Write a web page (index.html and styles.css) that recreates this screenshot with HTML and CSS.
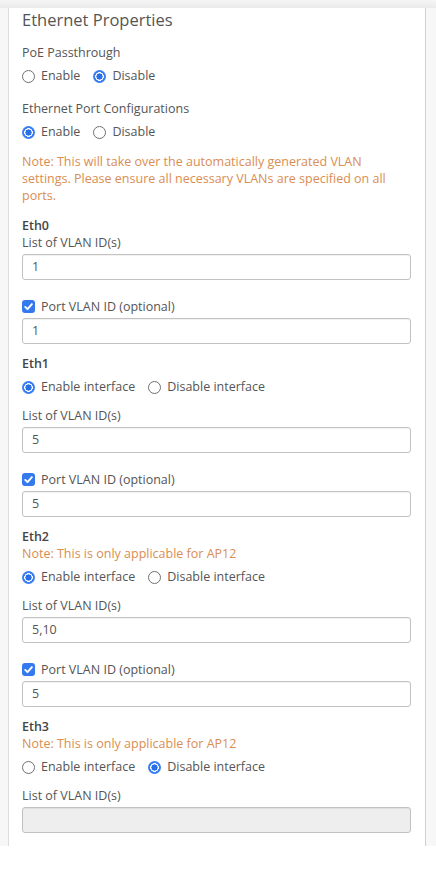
FILE: index.html
```html
<!DOCTYPE html>
<html lang="en">
<head>
<meta charset="utf-8">
<title>Ethernet Properties</title>
<link rel="stylesheet" href="styles.css">
</head>
<body>
<div class="topbar"></div>
<div class="page">
  <section class="panel">
    <h2 class="title">Ethernet Properties</h2>

    <div class="sec-label">PoE Passthrough</div>
    <div class="radios">
      <label class="opt"><span class="radio"></span>Enable</label>
      <label class="opt"><span class="radio on"></span>Disable</label>
    </div>

    <div class="sec-label sec-gap">Ethernet Port Configurations</div>
    <div class="radios">
      <label class="opt"><span class="radio on"></span>Enable</label>
      <label class="opt"><span class="radio"></span>Disable</label>
    </div>

    <p class="note note-block">Note: This will take over the automatically generated VLAN settings. Please ensure all necessary VLANs are specified on all ports.</p>

    <div class="port port-first">
      <div class="port-name">Eth0</div>
      <div class="vlan-label">List of VLAN ID(s)</div>
      <div class="input">1</div>
      <label class="check-row"><span class="checkbox"><svg viewBox="0 0 13 13" width="13" height="13"><path d="M3.2 6.9l2.3 2.3 4.4-5.1" fill="none" stroke="#fff" stroke-width="1.9" stroke-linecap="round" stroke-linejoin="round"/></svg></span>Port VLAN ID (optional)</label>
      <div class="input input-tight">1</div>
    </div>

    <div class="port">
      <div class="port-name">Eth1</div>
      <div class="radios port-radios">
        <label class="opt"><span class="radio on"></span>Enable interface</label>
        <label class="opt"><span class="radio"></span>Disable interface</label>
      </div>
      <div class="vlan-label after-radios">List of VLAN ID(s)</div>
      <div class="input">5</div>
      <label class="check-row"><span class="checkbox"><svg viewBox="0 0 13 13" width="13" height="13"><path d="M3.2 6.9l2.3 2.3 4.4-5.1" fill="none" stroke="#fff" stroke-width="1.9" stroke-linecap="round" stroke-linejoin="round"/></svg></span>Port VLAN ID (optional)</label>
      <div class="input input-tight">5</div>
    </div>

    <div class="port">
      <div class="port-name">Eth2</div>
      <p class="note">Note: This is only applicable for AP12</p>
      <div class="radios port-radios">
        <label class="opt"><span class="radio on"></span>Enable interface</label>
        <label class="opt"><span class="radio"></span>Disable interface</label>
      </div>
      <div class="vlan-label after-radios">List of VLAN ID(s)</div>
      <div class="input">5,10</div>
      <label class="check-row"><span class="checkbox"><svg viewBox="0 0 13 13" width="13" height="13"><path d="M3.2 6.9l2.3 2.3 4.4-5.1" fill="none" stroke="#fff" stroke-width="1.9" stroke-linecap="round" stroke-linejoin="round"/></svg></span>Port VLAN ID (optional)</label>
      <div class="input input-tight">5</div>
    </div>

    <div class="port">
      <div class="port-name">Eth3</div>
      <p class="note">Note: This is only applicable for AP12</p>
      <div class="radios port-radios">
        <label class="opt"><span class="radio"></span>Enable interface</label>
        <label class="opt"><span class="radio on"></span>Disable interface</label>
      </div>
      <div class="vlan-label after-radios">List of VLAN ID(s)</div>
      <div class="input disabled"></div>
    </div>
  </section>
</div>
</body>
</html>
```

FILE: styles.css
```css
html, body {
  margin: 0;
  padding: 0;
}

body {
  background: #ffffff;
  font-family: "Open Sans", "Noto Sans", sans-serif;
  font-size: 12.5px;
  color: #555555;
}

.topbar {
  height: 8px;
  background: linear-gradient(#f5f5f5, #ebebeb);
}

.page {
  background: #f7f7f7;
  padding: 0 10px 0 8px;
}

.panel {
  background: #ffffff;
  border-left: 1px solid #dddddd;
  border-right: 1px solid #d0d0d0;
  padding: 0 14px 13px 13px;
}

.title {
  margin: 0;
  font-size: 16.5px;
  line-height: 24px;
  font-weight: 400;
  color: #555555;
}

.sec-label {
  margin-top: 12px;
  line-height: 18px;
}

.sec-gap {
  margin-top: 14px;
}

.radios {
  display: flex;
  align-items: center;
  gap: 13px;
  height: 20px;
  margin-top: 4px;
}

.port-radios {
  margin-top: 5px;
}

.opt {
  display: flex;
  align-items: center;
  gap: 6px;
  line-height: 20px;
}

.radio {
  width: 13px;
  height: 13px;
  box-sizing: border-box;
  border-radius: 50%;
  border: 1px solid #6f6f6f;
  background: #ffffff;
  flex: none;
}

.radio.on {
  border: none;
  background: radial-gradient(circle at center, #2a6fe6 0 2.9px, #ffffff 3.3px 4.1px, #3a7ef2 4.5px);
}

.note {
  margin: 0;
  line-height: 17px;
  color: #da8d52;
}

.note-block {
  margin-top: 11px;
}

.port {
  margin-top: 11px;
}

.port-first {
  margin-top: 13px;
}

.port-name {
  font-weight: 600;
  line-height: 17px;
  color: #444444;
}

.vlan-label {
  line-height: 17px;
}

.after-radios {
  margin-top: 10px;
}

.input {
  margin-top: 3px;
  height: 26px;
  box-sizing: border-box;
  border: 1px solid #c2c2c2;
  border-radius: 3px;
  box-shadow: inset 0 1px 1px rgba(0, 0, 0, 0.06);
  padding: 0 9px;
  line-height: 24px;
  color: #555555;
  background: #ffffff;
}

.input-tight {
  margin-top: 2px;
}

.input.disabled {
  background: #eeeeee;
}

.check-row {
  display: flex;
  align-items: center;
  gap: 6px;
  height: 20px;
  margin-top: 16px;
}

.checkbox {
  width: 13px;
  height: 13px;
  border-radius: 3px;
  background: #3479ee;
  display: flex;
  flex: none;
}
```
